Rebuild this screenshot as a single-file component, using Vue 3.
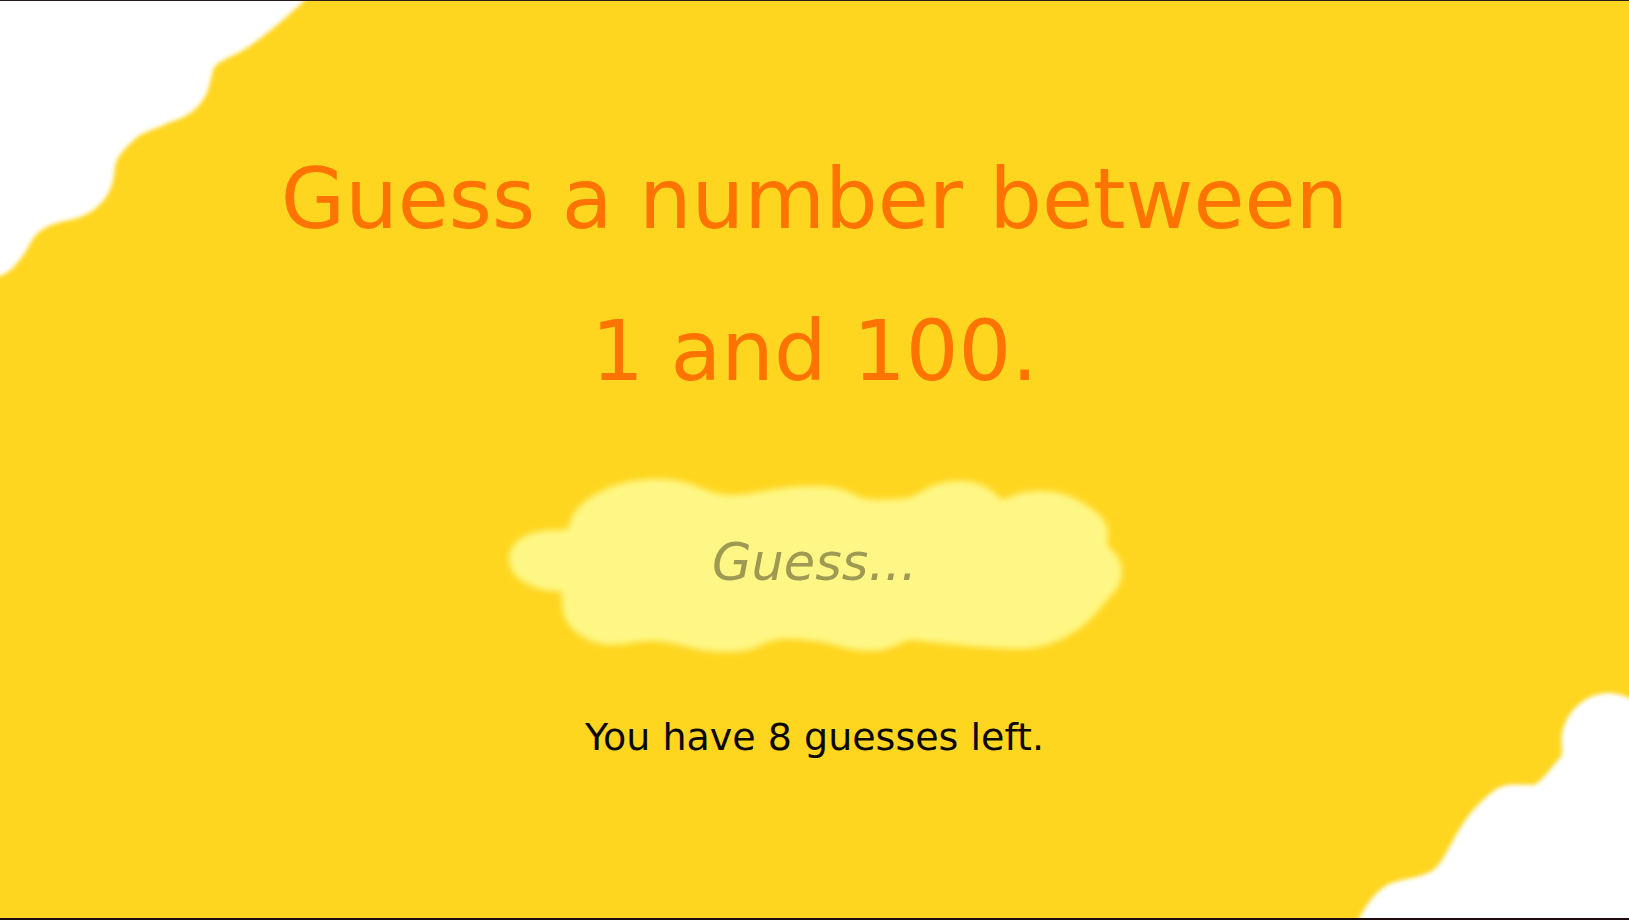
<script setup>
import { ref } from 'vue'

const guess = ref('')
const guessesLeft = ref(8)
</script>

<template>
  <main class="page">
    <svg class="cloud cloud-top" viewBox="0 0 320 290" aria-hidden="true">
      <path
        d="M-20 -20H324L302 2C278 24 256 42 240 51C229 57 218 60 214 67C210 76 211 90 200 103C191 114 180 118 168 122C154 129 142 131 135 138C123 149 117 156 115 165C114 181 111 194 96 207C79 221 62 218 47 226C30 234 31 246 21 257C12 269 9 271 0 275L-20 280Z"
      />
    </svg>
    <svg class="cloud cloud-bottom" viewBox="0 0 289 238" aria-hidden="true">
      <path
        d="M10 258L19 238C29 221 37 210 49 204C61 199 75 199 90 192C100 188 106 172 119 150C130 131 144 118 155 110C166 102 180 105 194 105C202 101 211 88 219 79C225 74 220 66 222 54C225 34 243 14 267 13C276 13 283 15 289 18L310 24V258Z"
      />
    </svg>

    <h1 class="title">Guess a number between 1 and 100.</h1>

    <form class="guess" @submit.prevent>
      <svg class="blob" viewBox="0 0 650 210" aria-hidden="true">
        <path
          d="M78 69C81 53 90 43 106 34C127 22 148 19 170 19C204 19 215 35 242 35C264 35 286 26 323 26C359 26 363 37 378 39C390 40 404 39 418 38C433 33 440 22 467 21C491 20 504 31 512 40C516 40 524 31 551 31C576 31 591 41 605 51C620 62 619 75 617 85C628 94 633 104 632 114C631 128 621 135 612 146C593 172 561 189 529 189C498 189 469 185 440 182C428 181 423 178 414 182C399 189 392 191 380 191C354 191 342 182 323 181C306 179 288 177 274 184C259 191 251 192 234 192C201 192 190 181 160 181C145 181 136 185 122 185C102 185 83 174 76 160C71 151 73 142 71 131C59 132 47 129 37 124C24 117 19 108 19 99C19 83 35 70 65 70Z"
        />
      </svg>
      <input
        v-model="guess"
        class="guess-input"
        type="text"
        inputmode="numeric"
        placeholder="Guess..."
        aria-label="Guess"
      />
    </form>

    <p class="note">You have {{ guessesLeft }} guesses left.</p>
  </main>
</template>

<style>
body {
  margin: 0;
}
</style>

<style scoped>
.page {
  position: relative;
  box-sizing: border-box;
  min-height: 100vh;
  overflow: hidden;
  display: flex;
  flex-direction: column;
  align-items: center;
  padding: 123px 24px 24px;
  border-top: 1px solid #2a1a1c;
  border-bottom: 2px solid #1c0c10;
  background: #ffd61f;
  font-family: "DejaVu Sans", sans-serif;
}

.cloud {
  position: absolute;
  overflow: visible;
  fill: #fff;
  filter: blur(2px);
}

.cloud-top {
  top: 0;
  left: 0;
  width: 320px;
}

.cloud-bottom {
  right: 0;
  bottom: 0;
  width: 289px;
}

.title {
  position: relative;
  max-width: 1100px;
  margin: 0;
  color: #ff7300;
  font-size: 83px;
  font-weight: 400;
  line-height: 152px;
  text-align: center;
}

.guess {
  position: relative;
  display: grid;
  place-items: center;
  width: 100%;
  max-width: 650px;
  margin-top: 32px;
}

.blob {
  grid-area: 1 / 1;
  width: 100%;
  fill: #fff785;
  filter: blur(3px);
}

.guess-input {
  grid-area: 1 / 1;
  position: relative;
  width: 70%;
  padding: 0 0 4px;
  border: 0;
  outline: 0;
  background: transparent;
  color: #000;
  font-family: inherit;
  font-size: 51px;
  font-style: italic;
  line-height: 64px;
  text-align: center;
}

.guess-input::placeholder {
  color: #9e9953;
  opacity: 1;
}

.note {
  position: relative;
  margin: 43px 0 0;
  color: #0a0800;
  font-size: 38px;
  line-height: 48px;
  text-align: center;
}
</style>
